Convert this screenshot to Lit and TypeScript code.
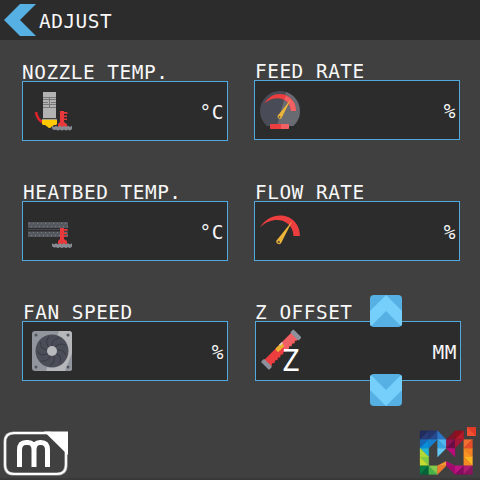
import { LitElement, html, css, svg } from "lit";
import { customElement } from "lit/decorators.js";

const nozzle = svg`
  <path d="M14 31Q15 38.500 21 41.500" fill="none" stroke="#e2232e" stroke-width="2.400"/>
  <rect x="21" y="11" width="13" height="26" fill="#b3b3b3"/>
  <path d="M21 16.500h13M21 18.500h13M21 21.500h5M29 21.500h5M21 23.500h13M21 26.500h13" stroke="#6a6a6a" stroke-width=".8"/>
  <path d="M27.500 16v10" stroke="#777"/>
  <path d="M21 38h13l1 1v4l-1 1h-2l-4 3h-1l-4-3h-2l-1-1v-4z" fill="#ffc800"/>
  <path d="M20 38.300h15" stroke="#999"/>`;
const thermo = svg`
  <path d="M0 0h4v1h3.500v1.800H4v1.700h3v1.500H4v1.500h3V9H4v2l3 2v3H-2v-3l2-2z" fill="#e8383b"/>`;
const waves = svg`
  <path d="M0 0q2 2.500 4 0q2 2.500 4 0q2 2.500 4 0q2 2.500 4 0q2 2.500 4 0v3.500q-2 2.500-4 .5q-2 2-4 0q-2 2-4 0q-2 2-4 0q-2 1.500-4-1z" fill="#888b92"/>`;
const needle = svg`<path d="M15 0L3.500 23A2.700 2.700 0 1 1-1.300 20.200Z" fill="#ecb53a"/>`;

// Side of one square in the mosaic logo.
const CELL = 8.75;
const mosaic: [string, string][] = [
  ["0,0 1,0 0,1", "#202c5e"], ["1,0 1,1 0,1", "#283a78"],
  ["1,0 2,0 1,1", "#24366f"], ["2,0 2,1 1,1", "#254a90"],
  ["2,0 3,1 2,1", "#2a75c8"],
  ["0,1 1,1 0,2", "#1667b5"], ["1,1 1,2 0,2", "#078fdc"],
  ["1,1 2,1 1,2", "#1680cf"],
  ["2,1 3,1 3,2", "#50b8ef"], ["2,1 3,2 2,2", "#35a2e3"],
  ["2,2 3,2 2,3", "#63c8f4"],
  ["0,2 1,2 1,3", "#22b5d5"], ["0,2 1,3 0,3", "#b4d936"],
  ["0,3 1,3 1,4", "#82cc43"], ["0,3 1,4 0,4", "#c5dc31"],
  ["0,4 1,4 0,5", "#087d42"], ["1,4 1,5 0,5", "#046338"],
  ["1,4 2,5 1,5", "#47b14a"], ["1,4 2,4 2,5", "#87c94c"],
  ["2,4 3,3.500 3,4", "#f69a32"], ["2,4 3,4 2,5", "#ef7a2d"],
  ["3,1 4,0 4,1", "#7c1527"], ["4,0 5,0 4,1", "#8e1020"], ["5,0 5,1 4,1", "#b71928"],
  ["3,1 4,1 3,2", "#8f1251"], ["4,1 4,2 3,2", "#680d48"],
  ["4,1 5,1 4,2", "#a51535"],
  ["3,2 4,2 4,3", "#b90c78"],
  ["5,1 6,1 5,2", "#f37032"], ["6,1 6,2 5,2", "#e84b27"],
  ["5,2 6,2 6,3", "#f78122"], ["5,2 6,3 5,3", "#f99221"],
  ["5,3 6,3 6,4", "#ffb522"], ["5,3 6,4 5,4", "#f58a24"],
  ["3,3.500 4,4 3,4", "#b20b77"], ["3,4 4,4 4,5", "#9e0c6d"],
  ["4,4 5,4 4,5", "#c01183"], ["5,4 5,5 4,5", "#830b60"],
  ["5,4 6,4 5,5", "#b01b72"], ["6,4 6,5 5,5", "#8b145f"],
];

@customElement("app-root")
export class AppRoot extends LitElement {
  static styles = css`
    :host { display: block; width: 480px; height: 480px; overflow: hidden; background: #404040; color: #f8f8f8;
      font-family: "DejaVu Sans Mono", monospace; font-size: 19.400px; letter-spacing: 0.520px; line-height: 24px; }
    svg { display: block; }
    .screen { display: flex; flex-direction: column; height: 480px; box-sizing: border-box; border-bottom: 2px solid #3a393a; }
    header { height: 40px; flex: none; background: #2c2c2c; display: flex; align-items: center; gap: 3px; padding-left: 4px; }
    .title { padding-top: 3px; }
    .fields { display: grid; grid-template-columns: 206px 206px; column-gap: 26px; grid-template-rows: 120px 120px 120px; padding: 20px 0 0 22px; }
    .field { position: relative; }
    .raised { margin-top: -1px; }
    .shifted { margin-left: 1px; margin-right: -1px; }
    .label { height: 21px; line-height: 26px; white-space: pre; }
    .inset { padding-left: 1px; }
    .box { box-sizing: border-box; height: 60px; border: 1px solid #51a9de; background: #2c2c2c; display: flex; align-items: center; justify-content: space-between; padding-right: 3px; }
    .unit { padding-top: 3px; }
    .icon { width: 60px; height: 58px; }
    .step { position: absolute; left: 115px; }
    .up { top: -5px; }
    .down { top: 74px; }
    footer { display: flex; justify-content: space-between; margin-top: auto; padding: 0 3px 1px 3px; align-items: flex-end; }
    .z { font: 30px "Noto Sans", sans-serif; letter-spacing: 0; }
  `;

  private field(label: string, unit: string, icon: unknown, cls = "", inset = true, extra: unknown = "") {
    return html`<section class="field ${cls}">
      <div class="label ${inset ? "inset" : ""}">${label}</div>
      <div class="box"><svg class="icon" viewBox="1 1 60 58">${icon}</svg><span class="unit">${unit}</span></div>
      ${extra}
    </section>`;
  }

  private step(cls: string, turn: string) {
    return html`<svg class="step ${cls}" width="32" height="32" viewBox="0 0 32 32">
      <rect width="32" height="32" rx="4" fill="#56b0e4"/>
      <path transform=${turn} d="M16 0L32 16V28a4 4 0 0 1-1 3L16 16L1 31a4 4 0 0 1-1-3V16Z" fill="#76cffa"/>
    </svg>`;
  }

  render() {
    const feed = svg`
      <path d="M12.800 46A20 20 0 1 1 39.200 46Z" fill="#494c56"/>
      <path d="M32 12A20 20 0 0 1 39.200 46H23Z" fill="#686b72"/>
      <path d="M10.500 23.500C19 8 41.500 12 42 31H37C36 18 21 14 10.500 23.500Z" fill="#ec3d3f"/>
      <path d="M32 15.700Q42 20 42 31H37Q36 22 30.500 19.500Z" fill="#f16062"/>
      <g transform="translate(24.900 19.300) scale(.8)">${needle}</g>
      <circle cx="25.500" cy="37" r="1" fill="#6b5a35"/>
      <rect x="16" y="44" width="19" height="5" rx="1" fill="#ec3d3f"/><path d="M27 44h7l1 1v3l-1 1h-7z" fill="#f16062"/>`;
    const flow = svg`
      <path transform="translate(6 14)" d="M0 12.500C11-7 40-2 40 21H33.500C33 5 14-1 0 12.500Z" fill="#ec3d3f"/>
      <g transform="translate(24 20) scale(.95)">${needle}</g>
      <circle cx="24.800" cy="41" r="1.200" fill="#6b5a35"/>`;
    const bed = svg`
      <rect x="6" y="21" width="40" height="6" fill="#565860"/><path d="M6 28.500h40" stroke="#484a50"/>
      <rect x="6" y="30.500" width="40" height="5.500" fill="#565860"/>
      <path d="M7 22.500h39M9 25.500h37M7 31.500h39M9 34.500h37" stroke="#797b82" stroke-dasharray="1 3"/>
      <g transform="translate(38 27)">${thermo}</g><g transform="translate(30 42)">${waves}</g>`;
    const fan = svg`
      <rect x="10" y="10" width="40" height="40" rx="3" fill="#91959d"/>
      <path d="M37 10h10a3 3 0 0 1 3 3v34a3 3 0 0 1-3 3H24Z" fill="#b5b7bb"/>
      <path d="M43 50L50 32V47a3 3 0 0 1-3 3Z" fill="#91959d"/>
      <circle cx="30" cy="30" r="16.500" fill="#4b4e58"/>
      ${[0, 1, 2, 3, 4, 5, 6, 7, 8].map(i => svg`<path transform="rotate(${i * 40} 30 30)" d="M30 25Q30 18 37 17" fill="none" stroke="#3a3c45"/>`)}
      <circle cx="30" cy="30" r="5" fill="#b9babd"/>
      ${[[14, 14], [46, 14], [14, 46], [46, 46]].map(([x, y]) => svg`<circle cx=${x} cy=${y} r="1.500" fill="#53565f"/>`)}`;
    const level = svg`
      <g transform="rotate(-45 26 28.500)">
        <path d="M6 24H46V32l-2 1.500-2-1.500-2 1.500-2-1.500-2 1.500-2-1.500-2 1.500-2-1.500-2 1.500-2-1.500-2 1.500-2-1.500-2 1.500-2-1.500-2 1.500-2-1.500-2 1.500-2-1.500-2 1.500-2-1.500Z" fill="#ec3d3f"/>
        <path d="M30 24H46V32l-2 1.500-2-1.500-2 1.500-2-1.500-2 1.500-2-1.500-2 1.500-2-1.500-2 1.500Z" fill="#f16062"/>
        <rect x="22" y="24" width="9" height="4.500" rx="1.500" fill="#ecb02f"/><path d="M28 24.500h4" stroke="#d5d5d8" stroke-width="1.500"/>
        <rect x="3" y="23" width="4.500" height="11.500" rx="1" fill="#8d919b"/><rect x="44.500" y="23" width="4.500" height="11.500" rx="1" fill="#8d919b"/>
      </g>
      <text class="z" x="27.500" y="50" fill="#fff">Z</text>`;
    return html`<main class="screen">
      <header><svg width="32" height="32" viewBox="0 0 32 32"><path d="M16 0h16L16 16l16 16H16L0 16Z" fill="#56b0e4"/></svg><span class="title">ADJUST</span></header>
      <div class="fields">
        ${this.field("NOZZLE TEMP.", "°C", svg`${nozzle}<g transform="translate(38 30)">${thermo}</g><g transform="translate(30 44.500)">${waves}</g>`, "", false)}
        ${this.field("FEED RATE", "%", feed, "raised")}
        ${this.field("HEATBED TEMP.", "°C", bed)}
        ${this.field("FLOW RATE", "%", flow)}
        ${this.field("FAN SPEED", "%", fan)}
        ${this.field("Z OFFSET", "MM", level, "shifted", false, html`${this.step("up", "")}${this.step("down", "matrix(1 0 0 -1 0 32)")}`)}
      </div>
      <footer>
        <svg width="66" height="46" viewBox="0 0 66 46">
          <path d="M11 2H47L63 20V34Q63 43 54 43H11Q2 43 2 34V11Q2 2 11 2Z" fill="none" stroke="#aaa" stroke-width="3.200"/>
          <path d="M11 2H47L63 20V34Q63 43 54 43H11Q2 43 2 34V11Q2 2 11 2Z" fill="none" stroke="#fff" stroke-width="1.800"/>
          <path d="M41 .5H65V24Z" fill="#fff"/>
          <path d="M16.500 36V19Q16.500 11.500 23 11.500H25Q31 11.500 31 19V36M31 19Q31 11.500 37 11.500H38Q44.500 11.500 44.500 19V36" fill="none" stroke="#fff" stroke-width="5"/>
        </svg>
        <svg width="60" height="50" viewBox="0 0 60 50">
          <g transform="translate(3 3.700) scale(${CELL})">
            ${mosaic.map(([points, color]) => svg`<polygon points=${points} fill=${color} stroke=${color} stroke-width=".03"/>`)}
          </g>
          <rect x="50" y="0" width="9" height="9" fill="#e13b27"/><path d="M50 0L59 9H50Z" fill="#f05132"/>
        </svg>
      </footer>
    </main>`;
  }
}
